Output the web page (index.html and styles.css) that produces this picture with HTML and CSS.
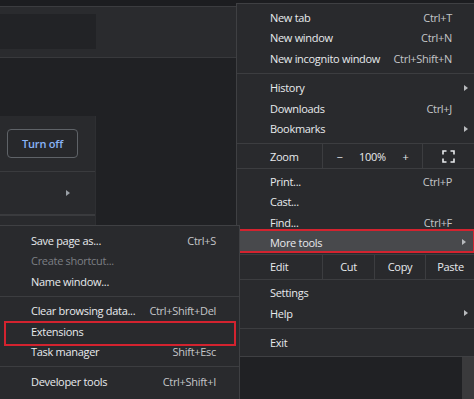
FILE: index.html
```html
<!DOCTYPE html>
<html lang="en">
<head>
  <meta charset="UTF-8" />
  <meta name="viewport" content="width=device-width, initial-scale=1" />
  <title>More tools</title>
  <link rel="stylesheet" href="styles.css">
</head>
<body>
  <div class="page">
    <div class="topbar"></div>
    <div class="header">
      <div class="search"></div>
    </div>
    <div class="content">
      <div class="panel">
        <div class="panel-row btn-row">
          <button class="turn-off">Turn off</button>
        </div>
        <div class="panel-row arrow-row">
          <span class="tri"></span>
        </div>
        <div class="panel-row"></div>
      </div>
      <div class="main-area"></div>
      <div class="scrollbar"></div>
    </div>
  </div>

  <div class="menu main-menu">
    <div class="item"><span class="label">New tab</span><span class="key">Ctrl+T</span><span class="sub"></span></div>
    <div class="item"><span class="label">New window</span><span class="key">Ctrl+N</span><span class="sub"></span></div>
    <div class="item"><span class="label">New incognito window</span><span class="key">Ctrl+Shift+N</span><span class="sub"></span></div>
    <div class="sep"></div>
    <div class="item"><span class="label">History</span><span class="sub more"></span></div>
    <div class="item"><span class="label">Downloads</span><span class="key">Ctrl+J</span><span class="sub"></span></div>
    <div class="item"><span class="label">Bookmarks</span><span class="sub more"></span></div>
    <div class="row zoom-row">
      <div class="cell-label">Zoom</div>
      <div class="cell zoom-ctrl">
        <span>&minus;</span><span>100%</span><span>+</span>
      </div>
      <div class="cell fill">
        <svg class="fullscreen" width="13" height="13" viewBox="0 0 13 13">
          <path d="M1 4.5V1H4.5M8.5 1H12V4.5M12 8.5V12H8.5M4.5 12H1V8.5" fill="none" stroke="#e8eaed" stroke-width="1.6"/>
        </svg>
      </div>
    </div>
    <div class="item"><span class="label">Print...</span><span class="key">Ctrl+P</span><span class="sub"></span></div>
    <div class="item"><span class="label">Cast...</span><span class="sub"></span></div>
    <div class="item"><span class="label">Find...</span><span class="key">Ctrl+F</span><span class="sub"></span></div>
    <div class="item active"><span class="label">More tools</span><span class="sub more"></span></div>
    <div class="row edit-row">
      <div class="cell-label">Edit</div>
      <div class="cell cut">Cut</div>
      <div class="cell copy">Copy</div>
      <div class="cell fill">Paste</div>
    </div>
    <div class="item"><span class="label">Settings</span><span class="sub"></span></div>
    <div class="item"><span class="label">Help</span><span class="sub more"></span></div>
    <div class="sep"></div>
    <div class="item"><span class="label">Exit</span><span class="sub"></span></div>
  </div>

  <div class="menu sub-menu">
    <div class="item"><span class="label">Save page as...</span><span class="key">Ctrl+S</span></div>
    <div class="item disabled"><span class="label">Create shortcut...</span></div>
    <div class="item"><span class="label">Name window...</span></div>
    <div class="sep"></div>
    <div class="item"><span class="label">Clear browsing data...</span><span class="key">Ctrl+Shift+Del</span></div>
    <div class="item ext"><span class="label">Extensions</span></div>
    <div class="item"><span class="label">Task manager</span><span class="key">Shift+Esc</span></div>
    <div class="sep"></div>
    <div class="item"><span class="label">Developer tools</span><span class="key">Ctrl+Shift+I</span></div>
  </div>
</body>
</html>
```

FILE: styles.css
```css
* {
  box-sizing: border-box;
}
body {
  margin: 0;
  width: 474px;
  height: 399px;
  overflow: hidden;
  position: relative;
  background-color: #202124;
  font-family: "Open Sans", "Noto Sans", sans-serif;
  font-size: 11px;
  letter-spacing: -0.3px;
  color: #e8eaed;
}

/* page behind the menus */
.page {
  display: flex;
  flex-direction: column;
  height: 100%;
}
.topbar {
  height: 7px;
  background-color: #1c1d20;
  border-bottom: 1px solid #3b3c3f;
}
.header {
  height: 51px;
  padding-top: 7px;
  background-color: #2a2b2e;
  border-bottom: 1px solid #38393c;
}
.search {
  width: 96px;
  height: 35px;
  background-color: #222326;
}
.content {
  flex: 1;
  display: flex;
}
.panel {
  width: 96px;
  margin-top: 58px;
  background-color: #292a2d;
  border-right: 1px solid #2e2f32;
}
.panel-row {
  border-bottom: 1px solid #3a3b3e;
}
.btn-row {
  height: 56px;
  padding: 13px 0 0 7px;
}
.turn-off {
  width: 71px;
  height: 29px;
  border: 1px solid #5f6368;
  border-radius: 4px;
  background-color: #27282b;
  color: #8ab4f8;
  font-family: inherit;
  font-size: 11px;
  font-weight: 600;
  letter-spacing: -0.2px;
}
.arrow-row {
  height: 43px;
  display: flex;
  align-items: center;
  justify-content: flex-end;
  padding-right: 25px;
}
.tri {
  border-left: 4px solid #9aa0a6;
  border-top: 3.5px solid transparent;
  border-bottom: 3.5px solid transparent;
}
.main-area {
  flex: 1;
}
.scrollbar {
  width: 12px;
  background-color: #3a3a3c;
}

/* menus */
.menu {
  position: absolute;
  background-color: #292a2d;
  border: 1px solid #3f4043;
}
.main-menu {
  left: 236px;
  top: 3px;
  width: 240px;
  padding: 3px 0;
}
.sub-menu {
  left: -1px;
  top: 225px;
  width: 241px;
  height: 190px;
  padding-top: 4px;
}
.item {
  display: flex;
  align-items: center;
  height: 20.5px;
  padding: 0 7px 0 33px;
  white-space: nowrap;
}
.sub-menu .item {
  padding: 0 23px 0 31px;
}
.label {
  flex: 1;
}
.key {
  color: #c4c6c9;
}
.item.disabled {
  color: #7c7f84;
}
.sub {
  width: 16px;
  display: flex;
  justify-content: flex-end;
}
.sub.more::after {
  content: "";
  border-left: 4px solid #b8babd;
  border-top: 3.5px solid transparent;
  border-bottom: 3.5px solid transparent;
}
.sep {
  height: 1px;
  margin: 4px 0;
  background-color: #3c3d40;
}

/* highlighted item and the red annotation boxes */
.item.active {
  height: 24px;
  margin-top: -4px;
  margin-left: -2px;
  padding-top: 3px;
  padding-left: 33px;
  background-color: #48494c;
  border: 2px solid #d3232f;
}
.item.ext {
  position: relative;
}
.item.ext::before {
  content: "";
  position: absolute;
  top: 0;
  bottom: -4px;
  left: 4px;
  right: 3px;
  border: 2px solid #d3232f;
}

/* zoom / edit rows */
.row {
  display: flex;
  height: 26px;
  margin: 2px 0;
  border-top: 1px solid #3c3d40;
  border-bottom: 1px solid #3c3d40;
}
.zoom-row {
  margin-top: 4px;
}
.edit-row {
  margin-top: 1px;
  margin-bottom: 3px;
}
.cell-label {
  width: 85px;
  padding-left: 33px;
  display: flex;
  align-items: center;
}
.cell {
  display: flex;
  align-items: center;
  justify-content: center;
  border-left: 1px solid #3c3d40;
}
.zoom-ctrl {
  width: 100px;
}
.zoom-ctrl span {
  flex: 1;
  text-align: center;
}
.cut {
  width: 52px;
}
.copy {
  width: 51px;
}
.fill {
  flex: 1;
}
.fullscreen {
  margin-right: 2px;
}
```
